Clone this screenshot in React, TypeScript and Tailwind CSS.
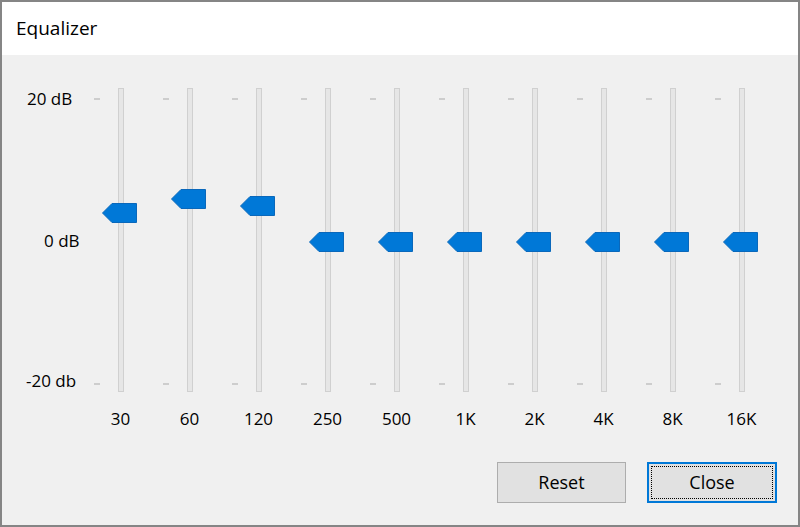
const BANDS = [
  { label: '30', gain: 4 },
  { label: '60', gain: 6 },
  { label: '120', gain: 5 },
  { label: '250', gain: 0 },
  { label: '500', gain: 0 },
  { label: '1K', gain: 0 },
  { label: '2K', gain: 0 },
  { label: '4K', gain: 0 },
  { label: '8K', gain: 0 },
  { label: '16K', gain: 0 },
];

const PX_PER_DB = 7.15;

const Thumb = () => (
  <svg width="35" height="20" viewBox="0 0 35 20">
    <polygon points="10,0.5 34.5,0.5 34.5,19.5 10,19.5 0.5,10" fill="#0078d7" stroke="#0a68bb" strokeWidth="1" />
  </svg>
);

const Band = ({ label, gain }: { label: string; gain: number }) => {
  // track is 304px tall, 0 dB sits 153px below its top
  const top = 153 - gain * PX_PER_DB - 10;
  return (
    <div className="flex w-[69px] flex-col items-center">
      <div className="relative h-[304px] w-[6px] border border-[#d0d0d0] bg-[#e6e6e6]">
        <div className="absolute left-[-25px] top-[9px] h-[2px] w-[6px] bg-[#cdcdcd]" />
        <div className="absolute left-[-25px] top-[294px] h-[2px] w-[6px] bg-[#cdcdcd]" />
        <div className="absolute left-[-17px]" style={{ top }}>
          <Thumb />
        </div>
      </div>
      <div className="mt-[17px] text-[17px] leading-[20px] text-black">{label}</div>
    </div>
  );
};

export default function App() {
  return (
    <div
      className="flex h-[527px] w-[800px] flex-col border-2 border-[#858585] bg-[#f0f0f0]"
      style={{ fontFamily: '"Open Sans", "Noto Sans", sans-serif' }}
    >
      {/* Title bar */}
      <div className="flex h-[53px] items-center bg-white pl-[14px] text-[19px] text-black">
        Equalizer
      </div>

      {/* Sliders */}
      <div className="flex pt-[33px]">
        <div className="relative h-[304px] w-[84px] text-[17px] leading-[20px] text-black">
          <div className="absolute left-[25px] top-[1px]">20 dB</div>
          <div className="absolute left-[42px] top-[143px]">0 dB</div>
          <div className="absolute left-[24px] top-[283px]">-20 db</div>
        </div>
        {BANDS.map((b) => (
          <Band key={b.label} label={b.label} gain={b.gain} />
        ))}
      </div>

      {/* Buttons */}
      <div className="mt-auto flex justify-end gap-[21px] pb-[22px] pr-[21px]">
        <button className="h-[41px] w-[129px] border border-[#adadad] bg-[#e1e1e1] text-[18px] text-black">
          Reset
        </button>
        <button className="h-[41px] w-[130px] border-2 border-[#0078d7] bg-[#e1e1e1] p-[2px] text-[18px] text-black">
          <div className="flex h-full w-full items-center justify-center border border-dotted border-black">
            Close
          </div>
        </button>
      </div>
    </div>
  );
}
